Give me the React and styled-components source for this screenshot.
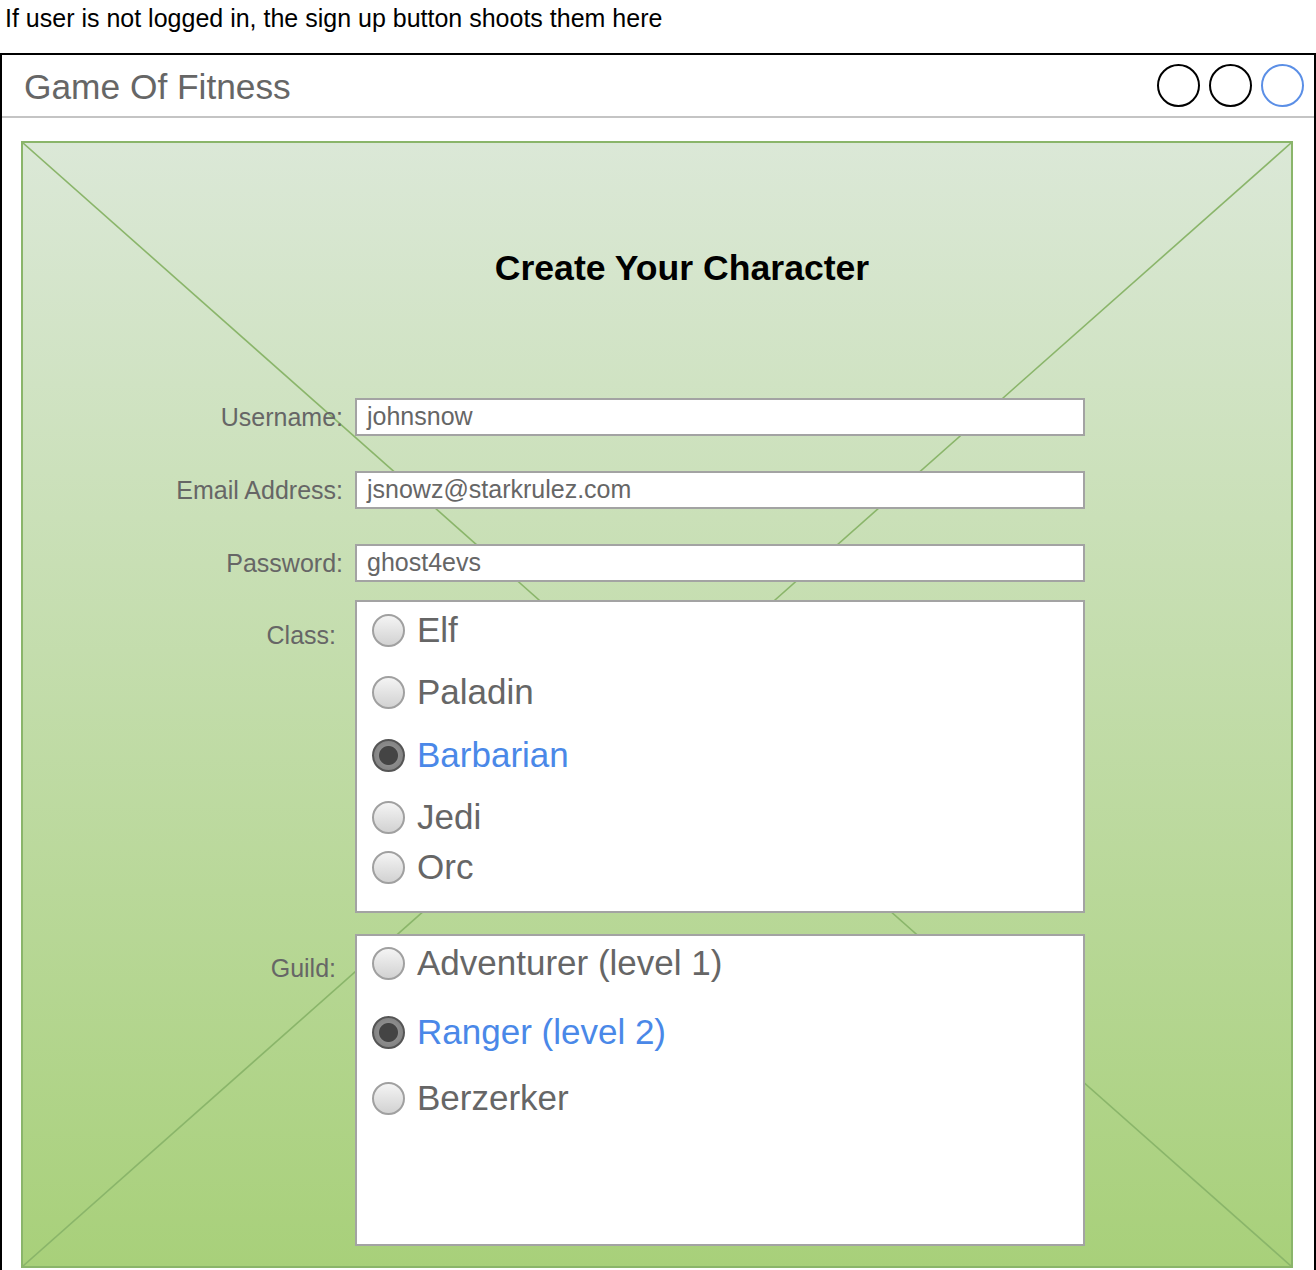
import React from "react";
import styled, { createGlobalStyle } from "styled-components";

const GlobalStyle = createGlobalStyle`
  html, body {
    margin: 0;
    padding: 0;
    background: #ffffff;
    font-family: "Liberation Sans", Arial, sans-serif;
  }
`;

const classes = [
  { name: "Elf", top: 8 },
  { name: "Paladin", top: 22 },
  { name: "Barbarian", top: 23, checked: true },
  { name: "Jedi", top: 22 },
  { name: "Orc", top: 10 }
];

const guilds = [
  { name: "Adventurer (level 1)", top: 7 },
  { name: "Ranger (level 2)", top: 29, checked: true },
  { name: "Berzerker", top: 26 }
];

const App = () => {
  return (
    <Page>
      <GlobalStyle />
      <Caption>If user is not logged in, the sign up button shoots them here</Caption>
      <Window>
        <Header>
          <AppTitle>Game Of Fitness</AppTitle>
          <Dots>
            <Dot />
            <Dot />
            <Dot blue />
          </Dots>
        </Header>
        <Body>
          <Panel>
            <Cross viewBox="0 0 100 100" preserveAspectRatio="none">
              <line x1="0" y1="0" x2="100" y2="100" vectorEffect="non-scaling-stroke" />
              <line x1="100" y1="0" x2="0" y2="100" vectorEffect="non-scaling-stroke" />
            </Cross>
            <Content>
              <Heading>Create Your Character</Heading>
              <Form>
                <Row mt={110}>
                  <Label>Username:</Label>
                  <Field>johnsnow</Field>
                </Row>
                <Row mt={35}>
                  <Label>Email Address:</Label>
                  <Field>jsnowz@starkrulez.com</Field>
                </Row>
                <Row mt={35}>
                  <Label>Password:</Label>
                  <Field>ghost4evs</Field>
                </Row>
                <Row mt={18}>
                  <Label pt={20} pr={7}>Class:</Label>
                  <Box h={313}>
                    {classes.map((c) => (
                      <Option key={c.name} mt={c.top}>
                        <Radio checked={c.checked} />
                        <OptionText checked={c.checked}>{c.name}</OptionText>
                      </Option>
                    ))}
                  </Box>
                </Row>
                <Row mt={21}>
                  <Label pt={19} pr={7}>Guild:</Label>
                  <Box h={312}>
                    {guilds.map((g) => (
                      <Option key={g.name} mt={g.top}>
                        <Radio checked={g.checked} />
                        <OptionText checked={g.checked}>{g.name}</OptionText>
                      </Option>
                    ))}
                  </Box>
                </Row>
              </Form>
            </Content>
          </Panel>
        </Body>
      </Window>
    </Page>
  );
};

export default App;

const Page = styled.div`
  width: 1316px;
  height: 1270px;
  overflow: hidden;
`;

const Caption = styled.div`
  height: 53px;
  padding-left: 5px;
  font-size: 25px;
  line-height: 37px;
  color: #000;
`;

const Window = styled.div`
  border: 2px solid #000;
  border-bottom: none;
  height: 1300px;
`;

const Header = styled.div`
  display: flex;
  align-items: center;
  justify-content: space-between;
  height: 61px;
  padding: 0 10px 0 22px;
  border-bottom: 2px solid #c4c4c4;
`;

const AppTitle = styled.div`
  font-size: 35.3px;
  color: #666;
  margin-top: 3px;
`;

const Dots = styled.div`
  display: flex;
  gap: 9px;
`;

const Dot = styled.div`
  width: 39px;
  height: 39px;
  border-radius: 50%;
  border: 2px solid ${(p) => (p.blue ? "#5b8fe6" : "#000")};
`;

const Body = styled.div`
  padding: 23px 21px 0 19px;
`;

const Panel = styled.div`
  position: relative;
  height: 1123px;
  border: 2px solid #8ab56a;
  background: linear-gradient(to bottom, #dbe8d7, #a8d07a);
`;

const Cross = styled.svg`
  position: absolute;
  inset: 0;
  width: 100%;
  height: 100%;
  line {
    stroke: #8ab56a;
    stroke-width: 1.6;
  }
`;

const Content = styled.div`
  position: relative;
  padding-top: 105px;
`;

const Heading = styled.h1`
  margin: 0;
  text-align: center;
  font-size: 35.6px;
  line-height: 40px;
  font-weight: 700;
  color: #000;
  padding-left: 50px;
`;

const Form = styled.div`
  display: flex;
  flex-direction: column;
`;

const Row = styled.div`
  display: grid;
  grid-template-columns: 320px 730px;
  column-gap: 12px;
  align-items: start;
  margin-top: ${(p) => p.mt}px;
`;

const Label = styled.div`
  text-align: right;
  font-size: 25px;
  color: #666;
  line-height: 38px;
  padding-top: ${(p) => (p.pt ? p.pt - 4 : 0)}px;
  padding-right: ${(p) => p.pr || 0}px;
`;

const Field = styled.div`
  box-sizing: border-box;
  height: 38px;
  border: 2px solid #a3a3a3;
  background: #fff;
  padding-left: 10px;
  font-size: 25px;
  line-height: 33px;
  color: #666;
`;

const Box = styled.div`
  box-sizing: border-box;
  height: ${(p) => p.h}px;
  border: 2px solid #a3a3a3;
  background: #fff;
  padding-left: 15px;
`;

const Option = styled.div`
  display: flex;
  align-items: center;
  gap: 12px;
  height: 40px;
  margin-top: ${(p) => p.mt}px;
`;

const Radio = styled.span`
  box-sizing: border-box;
  width: 33px;
  height: 33px;
  border-radius: 50%;
  flex: none;
  border: 2px solid ${(p) => (p.checked ? "#555" : "#a0a0a0")};
  background: ${(p) =>
    p.checked
      ? "radial-gradient(circle, #444 0, #444 9px, #8c8c8c 10px, #7a7a7a 100%)"
      : "linear-gradient(to bottom, #f4f4f4, #d2d2d2)"};
`;

const OptionText = styled.span`
  font-size: 35px;
  color: ${(p) => (p.checked ? "#4a88e8" : "#666")};
  line-height: 40px;
`;
